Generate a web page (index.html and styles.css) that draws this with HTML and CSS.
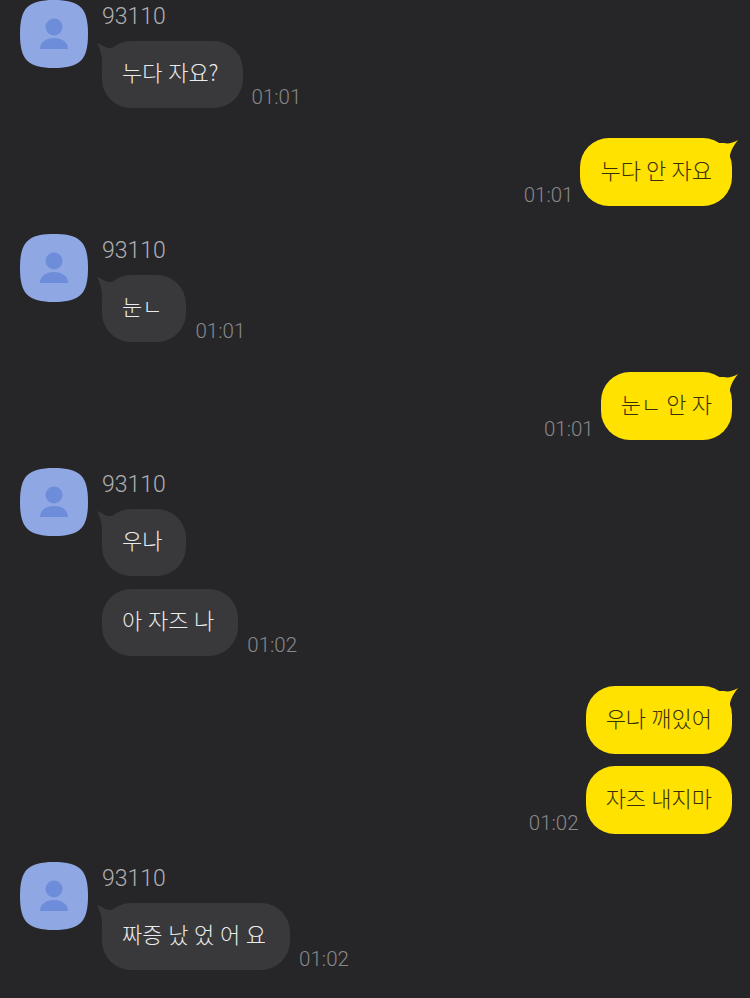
FILE: index.html
```html
<!DOCTYPE html>
<html lang="ko">
<head>
    <meta charset="UTF-8">
    <meta name="viewport" content="width=device-width, initial-scale=1.0">
    <title>93110</title>
    <link rel="stylesheet" href="styles.css">
</head>
<body>
    <svg class="defs" width="0" height="0">
        <defs>
            <symbol id="avatar" viewBox="0 0 68 68">
                <path fill="#8fa8e3" d="M34 0C60 0 68 8 68 34C68 60 60 68 34 68C8 68 0 60 0 34C0 8 8 0 34 0Z"/>
                <circle fill="#6d8ddb" cx="34" cy="27" r="8.5"/>
                <path fill="#6d8ddb" d="M20 49C20 42 26 38 34 38C42 38 48 42 48 49Z"/>
            </symbol>
            <symbol id="tail-in" viewBox="0 0 20 24">
                <path fill="#39393b" d="M0 0C4 1 7 4 11 5H20V24H5V18C5 12 3 6 0 0Z"/>
            </symbol>
            <symbol id="tail-out" viewBox="0 0 20 24">
                <path fill="#ffe200" d="M20 1C15 4 10 5 6 4H0V24H12V16C13 11 16 6 20 1Z"/>
            </symbol>
        </defs>
    </svg>

    <div class="chat">
        <div class="group in">
            <svg class="avatar"><use href="#avatar"/></svg>
            <div class="body">
                <div class="name">93110</div>
                <div class="row">
                    <div class="bubble tail">누다 자요?<svg class="tail-in"><use href="#tail-in"/></svg></div>
                    <span class="time">01:01</span>
                </div>
            </div>
        </div>

        <div class="group out">
            <div class="row">
                <span class="time">01:01</span>
                <div class="bubble tail">누다 안 자요<svg class="tail-out"><use href="#tail-out"/></svg></div>
            </div>
        </div>

        <div class="group in">
            <svg class="avatar"><use href="#avatar"/></svg>
            <div class="body">
                <div class="name">93110</div>
                <div class="row">
                    <div class="bubble tail">눈ㄴ<svg class="tail-in"><use href="#tail-in"/></svg></div>
                    <span class="time">01:01</span>
                </div>
            </div>
        </div>

        <div class="group out">
            <div class="row">
                <span class="time">01:01</span>
                <div class="bubble tail">눈ㄴ 안 자<svg class="tail-out"><use href="#tail-out"/></svg></div>
            </div>
        </div>

        <div class="group in">
            <svg class="avatar"><use href="#avatar"/></svg>
            <div class="body">
                <div class="name">93110</div>
                <div class="row">
                    <div class="bubble tail">우나<svg class="tail-in"><use href="#tail-in"/></svg></div>
                </div>
                <div class="row">
                    <div class="bubble">아 자즈 나</div>
                    <span class="time">01:02</span>
                </div>
            </div>
        </div>

        <div class="group out">
            <div class="row">
                <div class="bubble tail">우나 깨있어<svg class="tail-out"><use href="#tail-out"/></svg></div>
            </div>
            <div class="row">
                <span class="time">01:02</span>
                <div class="bubble">자즈 내지마</div>
            </div>
        </div>

        <div class="group in">
            <svg class="avatar"><use href="#avatar"/></svg>
            <div class="body">
                <div class="name">93110</div>
                <div class="row">
                    <div class="bubble tail">짜증 났 었 어 요<svg class="tail-in"><use href="#tail-in"/></svg></div>
                    <span class="time">01:02</span>
                </div>
            </div>
        </div>
    </div>
</body>
</html>
```

FILE: styles.css
```css
body {
    margin: 0;
    background: #262628;
    font-family: "Noto Sans CJK KR", "Noto Sans", sans-serif;
    font-weight: 300;
}
.defs {
    display: block;
}
.chat {
    display: flex;
    flex-direction: column;
    padding-right: 18px;
}
.group {
    display: flex;
}
.group.in {
    gap: 14px;
    padding-left: 20px;
    margin-bottom: 30px;
}
.group.out {
    flex-direction: column;
    align-items: flex-end;
    gap: 12px;
    margin-bottom: 28px;
}
.avatar {
    width: 68px;
    height: 68px;
    flex-shrink: 0;
}
.body {
    display: flex;
    flex-direction: column;
    gap: 13px;
}
.name {
    height: 28px;
    font-family: Roboto, sans-serif;
    font-size: 23px;
    line-height: 33px;
    color: #b0b0b2;
}
.row {
    display: flex;
    align-items: flex-end;
    gap: 9px;
}
.out .row {
    gap: 7px;
}
.bubble {
    position: relative;
    height: 67px;
    padding: 0 24px 0 20px;
    border-radius: 29px;
    font-size: 22px;
    line-height: 60px;
    white-space: nowrap;
}
.in .bubble {
    background: #39393b;
    color: #ececec;
    word-spacing: -0.5px;
}
.out .bubble {
    height: 68px;
    padding: 0 20px;
    background: #ffe200;
    color: #36300a;
    line-height: 62px;
    word-spacing: -1px;
}
.tail-in {
    position: absolute;
    left: -5px;
    top: 2px;
    width: 20px;
    height: 24px;
}
.tail-out {
    position: absolute;
    right: -6px;
    top: 1px;
    width: 20px;
    height: 24px;
}
.time {
    font-family: Roboto, sans-serif;
    font-size: 20.5px;
    line-height: 21px;
    color: #88888a;
}
```
